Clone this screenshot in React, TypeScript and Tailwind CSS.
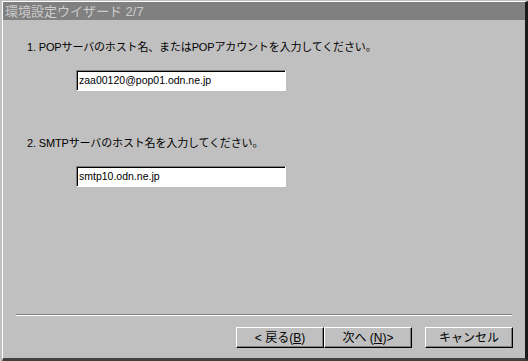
import React from "react";

const font = { fontFamily: '"Liberation Sans", "Noto Sans CJK JP", sans-serif' };

function Field({ value }: { value: string }) {
  return (
    <div className="ml-[49px] w-[210px] h-[21px] bg-white border border-t-[#808080] border-l-[#808080] border-b-white border-r-white shadow-[inset_1px_1px_0_#000] flex items-center pl-[2px]">
      <span className="text-[10.5px] leading-none text-black">{value}</span>
    </div>
  );
}

function Btn({ children, className = "" }: { children: React.ReactNode; className?: string }) {
  return (
    <button
      className={
        "w-[88px] h-[21px] bg-[#c0c0c0] border border-t-white border-l-white border-r-black border-b-black shadow-[inset_-1px_-1px_0_#808080] flex items-center justify-center text-[12px] leading-none text-black " +
        className
      }
    >
      {children}
    </button>
  );
}

export default function App() {
  return (
    <div className="w-[528px] h-[361px] bg-[#c0c0c0] overflow-hidden" style={font}>
      <div className="ml-[2px] mt-[1px] w-[526px] h-[360px] border-l border-t border-b-[3px] border-r-[3px] border-t-white border-l-white border-r-[#1a1a1a] border-b-[#404040] flex flex-col">
        {/* title bar */}
        <div className="h-[18px] bg-[#808080] flex items-center pl-[2px]">
          <span className="text-[13px] leading-none text-[#cccccc]">環境設定ウイザード 2/7</span>
        </div>

        {/* body */}
        <div className="pl-[24px] pt-[20px]">
          <div className="text-[11px] leading-[14px] text-black tracking-[-0.15px]">
            1. POPサーバのホスト名、またはPOPアカウントを入力してください。
          </div>
          <div className="mt-[16px]">
            <Field value="zaa00120@pop01.odn.ne.jp" />
          </div>
          <div className="mt-[45px] text-[11px] leading-[14px] text-black tracking-[-0.15px]">
            2. SMTPサーバのホスト名を入力してください。
          </div>
          <div className="mt-[16px]">
            <Field value="smtp10.odn.ne.jp" />
          </div>
        </div>

        {/* separator */}
        <div className="mt-[127px] ml-[13px] w-[496px] border-t border-b border-t-[#808080] border-b-white" />

        {/* buttons */}
        <div className="mt-[11px] flex pl-[233px]">
          <Btn>
            &lt; 戻る(<span className="underline">B</span>)
          </Btn>
          <Btn>
            次へ (<span className="underline">N</span>)&gt;
          </Btn>
          <Btn className="ml-[13px]">キャンセル</Btn>
        </div>
      </div>
    </div>
  );
}
